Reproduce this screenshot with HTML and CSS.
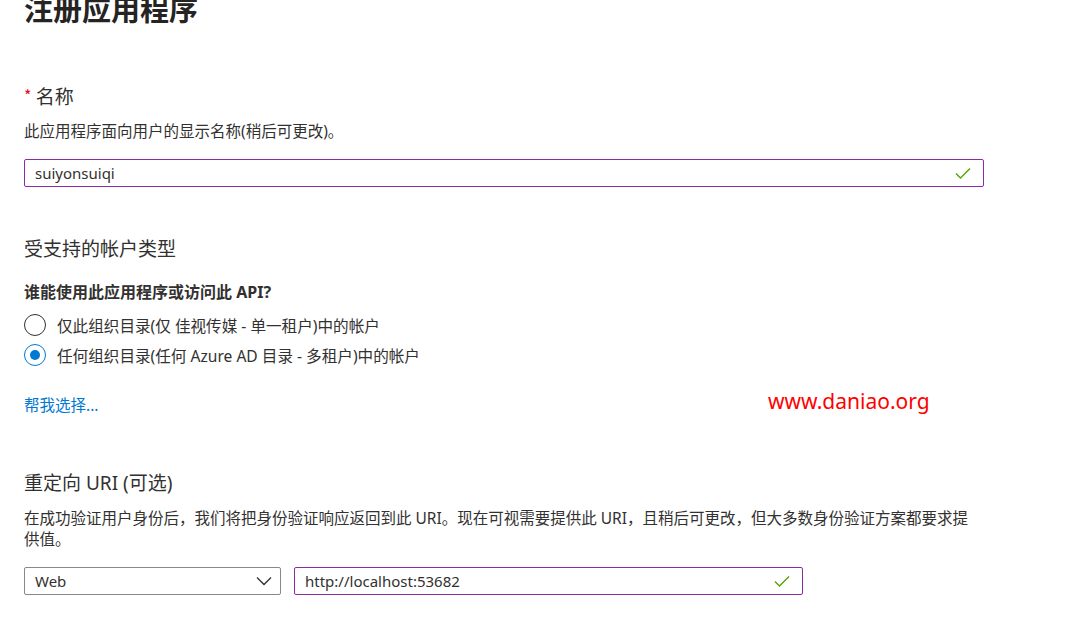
FILE: index.html
```html
<!DOCTYPE html>
<html lang="zh-CN">
<head>
<meta charset="utf-8">
<title>注册应用程序</title>
<link rel="stylesheet" href="styles.css">
</head>
<body>
<main class="page">
  <h1 class="title">注册应用程序</h1>

  <section class="name-section">
    <div class="field-label"><span class="req">*</span> 名称</div>
    <p class="desc">此应用程序面向用户的显示名称(稍后可更改)。</p>
    <div class="textbox wide">
      <span class="value">suiyonsuiqi</span>
      <svg class="check" width="16" height="12" viewBox="0 0 16 12"><path d="M1 6.5 L5.5 11 L15 1.5" fill="none" stroke="#57a300" stroke-width="1.4"/></svg>
    </div>
  </section>

  <section class="acct-section">
    <h2 class="section-title">受支持的帐户类型</h2>
    <div class="question">谁能使用此应用程序或访问此 API?</div>
    <div class="radios">
      <div class="radio-row"><span class="radio"></span><span>仅此组织目录(仅 佳视传媒 - 单一租户)中的帐户</span></div>
      <div class="radio-row"><span class="radio checked"></span><span>任何组织目录(任何 Azure AD 目录 - 多租户)中的帐户</span></div>
    </div>
    <a class="link" href="#">帮我选择...</a>
  </section>

  <section class="uri-section">
    <h2 class="section-title">重定向 URI (可选)</h2>
    <p class="desc uri-desc">在成功验证用户身份后，我们将把身份验证响应返回到此 URI。现在可视需要提供此 URI，且稍后可更改，但大多数身份验证方案都要求提供值。</p>
    <div class="uri-row">
      <div class="select">
        <span class="value">Web</span>
        <svg class="chev" width="16" height="10" viewBox="0 0 16 10"><path d="M1 1.5 L8 8.5 L15 1.5" fill="none" stroke="#323130" stroke-width="1.3"/></svg>
      </div>
      <div class="textbox uri">
        <span class="value">http://localhost:53682</span>
        <svg class="check" width="16" height="12" viewBox="0 0 16 12"><path d="M1 6.5 L5.5 11 L15 1.5" fill="none" stroke="#57a300" stroke-width="1.4"/></svg>
      </div>
    </div>
  </section>

  <div class="watermark">www.daniao.org</div>
</main>
</body>
</html>
```

FILE: styles.css
```css
html, body {
  margin: 0;
  padding: 0;
  background: #ffffff;
  overflow: hidden;
}

body {
  font-family: "Noto Sans", "Noto Sans CJK SC", sans-serif;
  color: #323130;
  width: 1071px;
  height: 630px;
}

.page {
  position: relative;
  padding-left: 24px;
  display: flex;
  flex-direction: column;
  align-items: flex-start;
}

.title {
  margin: -10px 0 0 0;
  font-size: 29px;
  line-height: 36px;
  font-weight: 700;
  color: #252423;
  font-family: "Noto Sans CJK SC", sans-serif;
}

section {
  display: flex;
  flex-direction: column;
  align-items: flex-start;
}

.name-section { margin-top: 56px; }

.field-label {
  font-size: 19px;
  line-height: 26px;
  font-family: "Noto Sans CJK SC", sans-serif;
}

.req {
  color: #e00b1c;
  font-size: 16px;
  vertical-align: 2px;
}

.desc {
  margin: 12px 0 0 0;
  font-size: 15.5px;
  line-height: 20px;
  font-family: "Noto Sans", "Noto Sans CJK SC", sans-serif;
}

.textbox, .select {
  box-sizing: border-box;
  height: 28px;
  border: 1px solid #8a2da5;
  border-radius: 2px;
  display: flex;
  align-items: center;
  justify-content: space-between;
  padding: 0 12px 0 10px;
  font-size: 15px;
  color: #323130;
}

.textbox.wide {
  width: 960px;
  margin-top: 18px;
}

.value { line-height: 20px; }

.acct-section { margin-top: 49px; }

.section-title {
  margin: 0;
  font-size: 19px;
  line-height: 26px;
  font-weight: 400;
  font-family: "Noto Sans", "Noto Sans CJK SC", sans-serif;
}

.question {
  margin-top: 20px;
  font-size: 16px;
  line-height: 20px;
  font-weight: 700;
}

.radios {
  margin-top: 8px;
  display: flex;
  flex-direction: column;
}

.radio-row {
  height: 30px;
  display: flex;
  align-items: center;
  gap: 11px;
  font-size: 15.6px;
}

.radio {
  box-sizing: border-box;
  width: 22px;
  height: 22px;
  border-radius: 50%;
  border: 1px solid #323130;
  display: flex;
  align-items: center;
  justify-content: center;
}

.radio.checked { border-color: #0078d4; }

.radio.checked::after {
  content: "";
  width: 10px;
  height: 10px;
  border-radius: 50%;
  background: #0078d4;
}

.link {
  margin-top: 25px;
  font-size: 15.5px;
  line-height: 20px;
  color: #0078d4;
  text-decoration: none;
}

.uri-section { margin-top: 55px; }

.uri-desc {
  line-height: 21px;
  width: 955px;
}

.uri-row {
  margin-top: 17px;
  display: flex;
  gap: 13px;
}

.select {
  width: 257px;
  border-color: #8a8886;
  padding-right: 8px;
}

.textbox.uri { width: 509px; }

.watermark {
  position: absolute;
  left: 768px;
  top: 386px;
  color: #ff0000;
  font-size: 21px;
  line-height: 30px;
  font-family: "Noto Sans", sans-serif;
}
```
